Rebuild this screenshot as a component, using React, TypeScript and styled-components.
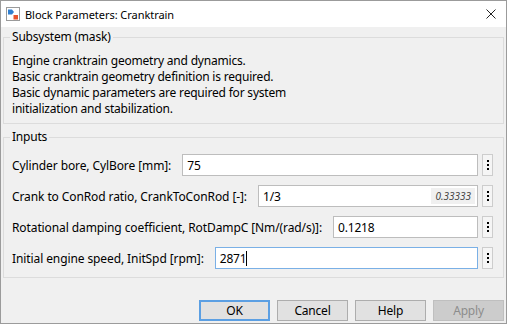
import React from 'react';
import styled, { createGlobalStyle } from 'styled-components';

const GlobalStyle = createGlobalStyle`
  html, body {
    margin: 0;
    padding: 0;
    background: #ffffff;
  }
  body {
    font-family: "Noto Sans", "Open Sans", sans-serif;
    font-size: 12px;
    letter-spacing: -0.2px;
    color: #000000;
  }
`;

const rows = [
  { label: 'Cylinder bore, CylBore [mm]:', value: '75' },
  { label: 'Crank to ConRod ratio, CrankToConRod [-]:', value: '1/3', evaluated: '0.33333' },
  { label: 'Rotational damping coefficient, RotDampC [Nm/(rad/s)]:', value: '0.1218' },
  { label: 'Initial engine speed, InitSpd [rpm]:', value: '2871', focused: true },
];

function BlockIcon() {
  return (
    <svg width="14" height="14" viewBox="0 0 14 14">
      <rect x="0.5" y="0.5" width="13" height="13" fill="#ffffff" stroke="#9a9a9a" />
      <path d="M2 2.5 H6 L8 5 L6 7.5 H2 Z" fill="#2f7fd0" />
      <rect x="7.5" y="8" width="4.5" height="4.5" fill="#e8532c" />
    </svg>
  );
}

function CloseIcon() {
  return (
    <svg width="10" height="10" viewBox="0 0 10 10">
      <path d="M0.5 0.5 L9.5 9.5 M9.5 0.5 L0.5 9.5" stroke="#222" strokeWidth="1" />
    </svg>
  );
}

export default function App() {
  return (
    <>
      <GlobalStyle />
      <Window>
        <TitleBar>
          <BlockIcon />
          <Title>Block Parameters: Cranktrain</Title>
          <CloseButton>
            <CloseIcon />
          </CloseButton>
        </TitleBar>
        <Body>
          <Group>
            <Legend>Subsystem (mask)</Legend>
            <Description>
              <Line>Engine cranktrain geometry and dynamics.</Line>
              <Line>Basic cranktrain geometry definition is required.</Line>
              <Line>Basic dynamic parameters are required for system</Line>
              <Line>initialization and stabilization.</Line>
            </Description>
          </Group>
          <Group $gap={5} $right={10}>
            <Legend>Inputs</Legend>
            <Form>
              {rows.map((r) => (
                <Row key={r.label}>
                  <Label>{r.label}</Label>
                  <Field $focused={!!r.focused}>
                    <Value>
                      {r.value}
                      {r.focused && <Caret />}
                    </Value>
                    {r.evaluated && <Evaluated>{r.evaluated}</Evaluated>}
                  </Field>
                  <MoreButton>
                    <Dot />
                    <Dot />
                    <Dot />
                  </MoreButton>
                </Row>
              ))}
            </Form>
          </Group>
          <ButtonBar>
            <Button $variant="default">OK</Button>
            <Button>Cancel</Button>
            <Button>Help</Button>
            <Button $variant="disabled">Apply</Button>
          </ButtonBar>
        </Body>
      </Window>
    </>
  );
}

const Window = styled.div`
  width: 507px;
  height: 324px;
  box-sizing: border-box;
  border: 1px solid #9b9b9b;
  display: flex;
  flex-direction: column;
  background: #f0f0f0;
`;

const TitleBar = styled.div`
  height: 26px;
  flex: none;
  background: #ffffff;
  display: flex;
  align-items: center;
  padding-left: 5px;
`;

const Title = styled.span`
  margin-left: 5px;
  font-size: 11px;
  letter-spacing: -0.05px;
  color: #000;
`;

const CloseButton = styled.div`
  margin-left: auto;
  width: 30px;
  height: 26px;
  display: flex;
  align-items: center;
  justify-content: center;
`;

const Body = styled.div`
  flex: 1;
  display: flex;
  flex-direction: column;
  padding: 2px 2px 2px 2px;
`;

const Group = styled.fieldset<{ $gap?: number; $right?: number }>`
  margin: ${(p) => p.$gap || 0}px 0 0 0;
  padding: 0 ${(p) => p.$right || 8}px 8px 8px;
  border: 1px solid #dcdcdc;
  min-width: 0;
`;

const Legend = styled.legend`
  padding: 0 2px;
  margin-left: -2px;
  line-height: 16px;
`;

const Description = styled.div`
  margin-top: 8px;
  margin-bottom: -2px;
`;

const Line = styled.div`
  line-height: 16px;
  height: 16px;
`;

const Form = styled.div`
  margin-top: 9px;
  display: flex;
  flex-direction: column;
  gap: 9px;
`;

const Row = styled.div`
  display: flex;
  align-items: center;
  height: 22px;
`;

const Label = styled.span`
  white-space: nowrap;
  letter-spacing: -0.1px;
  margin-right: 11px;
`;

const Field = styled.div<{ $focused: boolean }>`
  flex: 1;
  height: 22px;
  box-sizing: border-box;
  border: 1px solid ${(p) => (p.$focused ? '#7ab0e6' : '#bdbdbd')};
  background: #ffffff;
  display: flex;
  align-items: center;
  padding: 0 2px 0 4px;
`;

const Value = styled.span`
  flex: 1;
  display: flex;
  align-items: center;
`;

const Caret = styled.span`
  width: 1px;
  height: 15px;
  background: #000;
`;

const Evaluated = styled.span`
  background: #f0f0f0;
  font-style: italic;
  font-size: 10px;
  letter-spacing: 0;
  color: #444;
  height: 16px;
  line-height: 16px;
  padding: 0 4px;
`;

const MoreButton = styled.div`
  width: 11px;
  height: 22px;
  margin-left: 4px;
  box-sizing: border-box;
  border: 1px solid #cdcdcd;
  background: #f5f5f5;
  display: flex;
  flex-direction: column;
  align-items: center;
  justify-content: center;
  gap: 2px;
`;

const Dot = styled.span`
  width: 2px;
  height: 2px;
  background: #000;
`;

const ButtonBar = styled.div`
  margin-top: auto;
  display: flex;
  justify-content: flex-end;
  gap: 7px;
`;

const Button = styled.div<{ $variant?: 'default' | 'disabled' }>`
  width: 71px;
  height: 21px;
  box-sizing: border-box;
  display: flex;
  align-items: center;
  justify-content: center;
  background: ${(p) => (p.$variant === 'disabled' ? '#cccccc' : '#e1e1e1')};
  border: ${(p) =>
    p.$variant === 'default'
      ? '2px solid #5b9fe3'
      : p.$variant === 'disabled'
      ? '1px solid #bfbfbf'
      : '1px solid #adadad'};
  color: ${(p) => (p.$variant === 'disabled' ? '#8c8c8c' : '#000')};
`;
